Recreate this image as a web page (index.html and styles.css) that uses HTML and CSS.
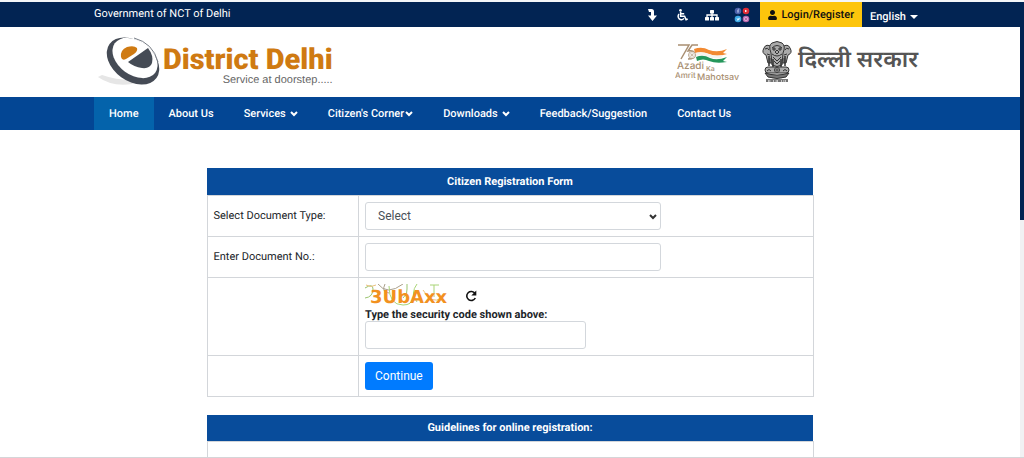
FILE: index.html
```html
<!DOCTYPE html>
<html lang="en">
<head>
    <meta charset="UTF-8">
    <meta name="viewport" content="width=device-width, initial-scale=1.0">
    <title>e-District Delhi</title>
    <link rel="stylesheet" href="styles.css">
</head>
<body>
    <div class="page">
        <div class="top-bar">
            <div class="container">
                <span class="gov-name">Government of NCT of Delhi</span>
                <div class="top-links">
                    <a href="#main" class="top-icon" aria-label="Skip to main content">
                        <svg width="12" height="12" viewBox="0 0 12 12"><path d="M2 0h3.500Q8 0 8 2.500v4H11L6.500 12 2 6.500h3V3H3z" fill="#fff"/></svg>
                    </a>
                    <a href="#" class="top-icon" aria-label="Accessibility">
                        <svg width="12" height="12" viewBox="0 0 12 12" fill="none" stroke="#fff" stroke-width="1.500">
                            <circle cx="4.500" cy="1.300" r="1.300" fill="#fff" stroke="none"/>
                            <path d="M4.600 2.500v4.700h4l1.500 3.500 1.600-.7M4.800 4.800h3.400"/>
                            <path d="M3 5.100a3.300 3.300 0 1 0 5 4.300"/>
                        </svg>
                    </a>
                    <a href="#" class="top-icon" aria-label="Sitemap">
                        <svg width="14" height="12" viewBox="0 0 14 12">
                            <path d="M7 4v5M2 9V6h10v3" fill="none" stroke="#fff" stroke-width="1.300"/>
                            <g fill="#fff"><rect x="5" y="1" width="4" height="3.500" rx=".5"/><rect y="8" width="4" height="3.500" rx=".5"/><rect x="5" y="8" width="4" height="3.500" rx=".5"/><rect x="10" y="8" width="4" height="3.500" rx=".5"/></g>
                        </svg>
                    </a>
                    <a href="#" class="top-icon" aria-label="Social media">
                        <svg width="16" height="16" viewBox="0 0 16 16">
                            <circle cx="4" cy="4" r="3.300" fill="#4a5fa8"/><path d="M5.200 2.200h-.7Q4 2.200 4 3v3M3 4h2" stroke="#bcc8ea" stroke-width=".8" fill="none"/>
                            <circle cx="12" cy="4" r="3.300" fill="#e02b35"/><path d="M11 2.700v2.600L13.300 4z" fill="#fff"/>
                            <circle cx="4" cy="12" r="3.300" fill="#3ba9e6"/><path d="M2.300 10.800q1 1 2 .9 0-1.200 1.500-.8-.1 2.700-3.500 2.600l1-.8z" fill="#d9f1ff"/>
                            <circle cx="12" cy="12" r="3.300" fill="#b765ac"/><rect x="10.500" y="10.500" width="3" height="3" rx=".8" fill="none" stroke="#f1d3ea" stroke-width=".7"/>
                        </svg>
                    </a>
                    <a href="#" class="login-link">
                        <svg width="9" height="10" viewBox="0 0 448 512"><path fill="#111" d="M224 256c70.700 0 128-57.300 128-128S294.700 0 224 0 96 57.300 96 128s57.300 128 128 128zm89.600 32h-16.700c-22.200 10.200-46.900 16-72.900 16s-50.600-5.800-72.900-16h-16.700C60.200 288 0 348.200 0 422.400V464c0 26.500 21.500 48 48 48h352c26.500 0 48-21.500 48-48v-41.600c0-74.200-60.200-134.400-134.400-134.400z"/></svg>
                        Login/Register
                    </a>
                    <a href="#" class="lang-link">English <span class="caret"></span></a>
                </div>
            </div>
        </div>

        <header class="header">
            <div class="container">
                <a href="#" class="brand">
                    <svg class="brand-mark" width="66" height="50" viewBox="0 0 66 50">
                        <path d="M4 40q14 10 34 7l12-5Q28 45 8 38z" fill="#e6e6e6"/>
                        <ellipse cx="39" cy="24" rx="29" ry="20" transform="rotate(36 39 24)" fill="#454b55"/>
                        <ellipse cx="41" cy="21" rx="25" ry="17" transform="rotate(36 41 21)" fill="#fff"/>
                        <path d="M40 1Q59 6 64 25" fill="none" stroke="#777d86" stroke-width="1"/>
                        <path d="M27 20q-1-7 6-10 7-2 10 1 1 3-3 6l-8 5q-4 2-5-2z" fill="#cf7a12"/>
                        <path d="M34 25 54 11q6 8 4 15-2 6-10 5-8-1-14-6z" fill="#454b55"/>
                    </svg>
                    <span class="brand-text">
                        <span class="brand-name">District Delhi</span>
                        <span class="brand-tag">Service at doorstep.....</span>
                    </span>
                </a>
                <div class="header-right">
                    <svg width="67" height="42" viewBox="0 0 67 42" role="img" aria-label="Azadi Ka Amrit Mahotsav">
                        <path d="M3 4h11L6 18M23 4h-6l-4 6q7-1 7 4 0 4-7 4" fill="none" stroke="#a98f72" stroke-width="1.500"/>
                        <path d="M19 8q8-3 15 1 9 3 18-1l-4 4 4 1q-10 3-18 0-7-3-14-1z" fill="#f28a32"/>
                        <path d="M20 12q8-2 14 1 6 3 14 1l-2 3q-7 1-12-1-7-3-13-1z" fill="#f6f3ee"/>
                        <path d="M21 16q7-3 14 1 7 3 17-1l-4 4 4 1q-11 2-18-1-6-3-12 0z" fill="#25975b"/>
                        <circle cx="17" cy="14" r="3.500" fill="#fff" stroke="#a98f72" stroke-width=".8"/>
                        <path d="M17 11v6M14 14h6M15 12l4 4M19 12l-4 4" stroke="#a98f72" stroke-width=".4"/>
                        <g class="azadi-text">
                            <text x="2" y="28" font-size="10">Azadi</text>
                            <text x="31" y="30" font-size="7">Ka</text>
                            <text x="0" y="37" font-size="8">Amrit</text>
                            <text x="22" y="39" font-size="9">Mahotsav</text>
                        </g>
                    </svg>
                    <svg class="emblem" width="30" height="42" viewBox="0 0 30 42" role="img" aria-label="State Emblem of India">
                        <g fill="#aaa" stroke="#333" stroke-width="1">
                            <path d="M10 6Q4 2 2 7q-3 5 2 7l2 8h5zM20 6q6-4 8 1 3 5-2 7l-2 8h-5z"/>
                            <path d="M9 12Q6 4 10 2q5-3 10 0 4 3 1 10l-1 12q-5 3-10 0z"/>
                            <path d="M10 7q5-5 10 0M11 7v2h2V7zM17 7v2h2V7zM13 11l2-2 2 2-2 2zM10 13q5 4 10 0M11 16l4 4 4-4M12 20l3 3 3-3M3 8q3-2 4 1M27 8q-3-2-4 1M5 13l3 1M25 13l-3 1M8 17v5M22 17v5" fill="none"/>
                            <path d="M7 15v10M23 15v10M11 18v8M19 18v8" stroke-width="1.500"/>
                            <rect x="3" y="26" width="24" height="6" rx="3"/>
                            <circle cx="15" cy="29" r="2.500" fill="#eee"/>
                            <path d="M5 30q2-3 4 0M21 30q2-3 4 0M15 27v4M13 29h4" fill="none"/>
                            <path d="M3 32q12 4 24 0l-3 4q-9 3-18 0z" fill="#777"/>
                        </g>
                        <path d="M4 38.500h22" stroke="#444" stroke-width=".7"/>
                        <path d="M4 40h22" stroke="#444" stroke-width="1.500" stroke-dasharray="2 .6 1 .6 3 .6"/>
                    </svg>
                    <span class="gov-hindi" lang="hi">दिल्ली सरकार</span>
                </div>
            </div>
        </header>

        <nav class="nav">
            <div class="container">
                <a href="#" class="active">Home</a>
                <a href="#">About Us</a>
                <a href="#">Services <svg class="chev" width="8" height="6" viewBox="0 0 8 6"><path d="M1 1l3 3 3-3"/></svg></a>
                <a href="#" class="tight">Citizen's Corner<svg class="chev" width="8" height="6" viewBox="0 0 8 6"><path d="M1 1l3 3 3-3"/></svg></a>
                <a href="#">Downloads <svg class="chev" width="8" height="6" viewBox="0 0 8 6"><path d="M1 1l3 3 3-3"/></svg></a>
                <a href="#">Feedback/Suggestion</a>
                <a href="#">Contact Us</a>
            </div>
        </nav>

        <main id="main" class="main">
            <form>
                <table class="form-table">
                    <thead>
                        <tr><th colspan="2">Citizen Registration Form</th></tr>
                    </thead>
                    <tbody>
                        <tr>
                            <td class="label-cell"><label for="doc-type">Select Document Type:</label></td>
                            <td>
                                <div class="select-wrap">
                                    <select id="doc-type" class="form-control"><option>Select</option></select>
                                    <svg class="select-arrow" width="8" height="6" viewBox="0 0 8 6"><path d="M1 1l3 3 3-3"/></svg>
                                </div>
                            </td>
                        </tr>
                        <tr>
                            <td class="label-cell"><label for="doc-no">Enter Document No.:</label></td>
                            <td><input type="text" id="doc-no" class="form-control"></td>
                        </tr>
                        <tr>
                            <td></td>
                            <td>
                                <div class="captcha-row">
                                    <svg width="84" height="24" viewBox="0 0 84 24" role="img" aria-label="Security code">
                                        <g fill="none" stroke-width="1">
                                            <path d="M0 4q8-5 8 1 0 8-8 9M42 0v5q1 5-4 9" stroke="#9bc46f"/>
                                            <path d="M13 0q9 12 25 0M20 0q-4 8 4 9" stroke="#aaa08c"/>
                                            <path d="M24 2q0 19 14 19 9 0 10-7M52 0q-7 9 0 18M65 1h9M69 1v12" stroke="#a9d477"/>
                                            <path d="M1 1q5 3 10 0M58 6q9 15 18 8" stroke="#ecc27f"/>
                                        </g>
                                        <text class="captcha-code" x="5" y="19">3UbAxx</text>
                                    </svg>
                                    <button type="button" class="refresh" aria-label="Refresh code">
                                        <svg width="12" height="12" viewBox="0 0 12 12"><path d="M10 3.500A4.500 4.500 0 1 0 10.300 8" fill="none" stroke="#111" stroke-width="1.600"/><path d="M11.300.5v5h-5z" fill="#111"/></svg>
                                    </button>
                                </div>
                                <label for="captcha" class="captcha-label">Type the security code shown above:</label>
                                <input type="text" id="captcha" class="form-control short">
                            </td>
                        </tr>
                        <tr>
                            <td></td>
                            <td><button type="button" class="btn-continue">Continue</button></td>
                        </tr>
                    </tbody>
                </table>
            </form>

            <table class="form-table">
                <thead>
                    <tr><th>Guidelines for online registration:</th></tr>
                </thead>
                <tbody>
                    <tr><td class="guide-cell"></td></tr>
                </tbody>
            </table>
        </main>
    </div>
    <div class="scroll-track"><div class="scroll-thumb"></div></div>
</body>
</html>
```

FILE: styles.css
```css
* {
    margin: 0;
    padding: 0;
    box-sizing: border-box;
}

body {
    display: flex;
    height: 100vh;
    overflow: hidden;
    font-family: Roboto, "Liberation Sans", sans-serif;
    font-size: 11px;
    text-rendering: geometricPrecision;
    color: #212529;
    background: #fff;
    border-top: 2px solid #f4f6f8;
    border-bottom: 1px solid #d5d5d8;
}

a {
    color: inherit;
    text-decoration: none;
}

svg {
    flex: none;
}

.page {
    flex: 1;
    overflow: hidden;
}

.container {
    display: flex;
    align-items: center;
    width: 100%;
    max-width: 832px;
    margin: 0 auto;
}

/* top bar */
.top-bar {
    background: #022453;
    color: #fff;
    font-weight: 500;
}

.top-bar .container {
    justify-content: space-between;
    height: 25px;
}

.gov-name {
    font-weight: 400;
    padding-bottom: 3px;
}

.top-links {
    display: flex;
    align-items: center;
    height: 100%;
    padding-right: 8px;
}

.top-icon {
    display: flex;
    justify-content: center;
    width: 30px;
}

.login-link {
    display: flex;
    align-items: center;
    gap: 4px;
    height: 100%;
    margin-left: 3px;
    padding: 0 8px;
    background: #fdc50c;
    color: #111;
}

.lang-link {
    display: flex;
    align-items: center;
    gap: 4px;
    padding: 4px 0 0 8px;
}

.caret {
    border: 4px solid transparent;
    border-top-color: #fff;
    border-bottom: 0;
}

/* header */
.header .container {
    justify-content: space-between;
    height: 70px;
}

.brand {
    display: flex;
    align-items: center;
}

.brand-text {
    display: flex;
    flex-direction: column;
    margin-left: 3px;
    padding-top: 8px;
}

.brand-name {
    font-size: 29px;
    line-height: 28px;
    font-weight: 900;
    color: #cf7a12;
}

.brand-tag {
    align-self: flex-end;
    font-family: "Liberation Sans", Arial, sans-serif;
    line-height: 12px;
    color: #666;
}

.header-right {
    display: flex;
    align-items: center;
    padding-right: 8px;
}

.azadi-text {
    font-family: Inter, sans-serif;
    font-weight: 500;
    fill: #a98f72;
}

.emblem {
    margin: 0 6px 0 20px;
}

.gov-hindi {
    font-family: "Noto Sans", "Noto Sans Devanagari", sans-serif;
    font-size: 23px;
    line-height: 32px;
    font-weight: 600;
    color: #555;
    padding-bottom: 8px;
}

/* nav */
.nav {
    background: #034694;
    color: #fff;
    font-weight: 500;
}

.nav a {
    display: flex;
    align-items: center;
    gap: 4px;
    height: 33px;
    padding: 0 15px;
}

.nav a.tight {
    gap: 1px;
}

.nav a.active {
    background: #0463ab;
}

.chev,
.select-arrow {
    fill: none;
    stroke: #fff;
    stroke-width: 2;
}

/* form */
.main {
    width: 100%;
    max-width: 607px;
    margin: 0 auto;
    padding-top: 38px;
}

.form-table {
    width: 100%;
    border-collapse: collapse;
    margin-bottom: 18px;
}

.form-table th {
    height: 27px;
    background: #084c9b;
    color: #fff;
    font-weight: 700;
}

.form-table td {
    border: 1px solid #d3d6da;
    padding: 6px;
}

.label-cell {
    width: 25%;
}

.form-control {
    display: block;
    width: 67%;
    height: 28px;
    padding: 0 12px;
    border: 1px solid #d3d7dc;
    border-radius: 3px;
    background: #fff;
    font-family: inherit;
    font-size: 12px;
    color: #495057;
}

.select-wrap {
    position: relative;
    width: 67%;
}

.select-wrap .form-control {
    width: 100%;
    appearance: none;
}

/* arrow lies over the select box */
.select-arrow {
    position: absolute;
    right: 4px;
    top: 12px;
    stroke: #333;
    pointer-events: none;
}

.form-control.short {
    width: 50%;
}

.captcha-row {
    display: flex;
    align-items: center;
    gap: 16px;
}

.captcha-code {
    font-family: "DejaVu Sans", sans-serif;
    font-size: 18px;
    font-weight: 700;
    fill: #f2911f;
}

.refresh {
    display: flex;
    border: 0;
    background: none;
    cursor: pointer;
}

.captcha-label {
    display: block;
    line-height: 13px;
    font-weight: 700;
}

.btn-continue {
    display: block;
    height: 28px;
    padding: 0 10px;
    border: 0;
    border-radius: 3px;
    background: #007bff;
    color: #fff;
    font-family: inherit;
    font-size: 12px;
    cursor: pointer;
}

.guide-cell {
    height: 40px;
}

/* page scrollbar */
.scroll-track {
    width: 4px;
    background: #f1f1f3;
}

.scroll-thumb {
    height: 48%;
    background: #022453;
}
```
